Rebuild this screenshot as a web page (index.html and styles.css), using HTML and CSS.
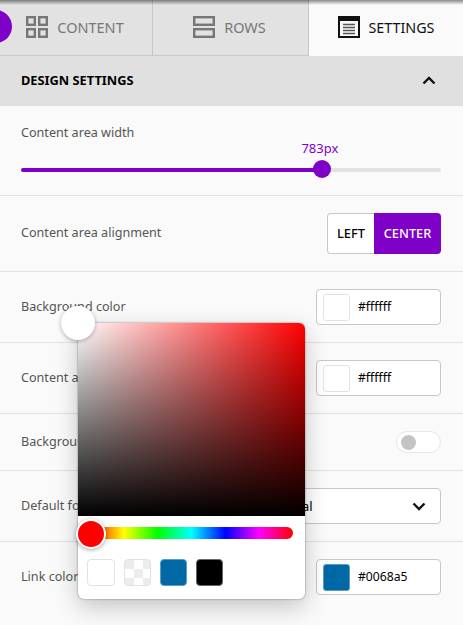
FILE: index.html
```html
<!DOCTYPE html>
<html lang="en">
<head>
    <meta charset="UTF-8">
    <meta name="viewport" content="width=device-width, initial-scale=1.0">
    <title>Design settings</title>
    <link rel="stylesheet" href="styles.css">
</head>
<body>
    <div class="top-shadow"></div>
    <div class="fab"></div>

    <nav class="tabs">
        <div class="tab">
            <svg class="tab-icon" viewBox="0 0 22 22" fill="none" stroke="currentColor" stroke-width="2.4">
                <rect x="1.2" y="1.2" width="7.6" height="7.6"/>
                <rect x="13.2" y="1.2" width="7.6" height="7.6"/>
                <rect x="1.2" y="13.2" width="7.6" height="7.6"/>
                <rect x="13.2" y="13.2" width="7.6" height="7.6"/>
            </svg>
            <span>CONTENT</span>
        </div>
        <div class="tab">
            <svg class="tab-icon" viewBox="0 0 22 22" fill="none" stroke="currentColor" stroke-width="2.4">
                <rect x="1.2" y="1.2" width="19.6" height="7.6"/>
                <rect x="1.2" y="13.2" width="19.6" height="7.6"/>
            </svg>
            <span>ROWS</span>
        </div>
        <div class="tab active">
            <svg class="tab-icon" viewBox="0 0 22 22" fill="none" stroke="currentColor">
                <rect x="1" y="1" width="20" height="20" stroke-width="2"/>
                <path d="M1 3.5h20" stroke-width="3"/>
                <path d="M5 8.5h12M5 11.5h12M5 14.5h12M5 17.5h12" stroke-width="1.3" stroke="#555"/>
            </svg>
            <span>SETTINGS</span>
        </div>
    </nav>

    <div class="section-head">
        <h2>DESIGN SETTINGS</h2>
        <svg class="chevron" viewBox="0 0 14 9" fill="none" stroke="#111" stroke-width="2.4">
            <path d="M1.5 7.5 7 2l5.5 5.5"/>
        </svg>
    </div>

    <div class="row row-slider">
        <label>Content area width</label>
        <div class="slider">
            <span class="slider-value">783px</span>
            <div class="slider-track">
                <div class="slider-fill" style="width: 71.6%"></div>
                <div class="slider-thumb" style="left: 71.6%"></div>
            </div>
        </div>
    </div>

    <div class="row">
        <label>Content area alignment</label>
        <div class="btn-group">
            <button class="btn">LEFT</button>
            <button class="btn on">CENTER</button>
        </div>
    </div>

    <div class="row">
        <label>Background color</label>
        <div class="color-input">
            <span class="swatch"></span>
            <span>#ffffff</span>
        </div>
    </div>

    <div class="row">
        <label>Content area background</label>
        <div class="color-input">
            <span class="swatch"></span>
            <span>#ffffff</span>
        </div>
    </div>

    <div class="row">
        <label>Background image</label>
        <div class="toggle"><span class="knob"></span></div>
    </div>

    <div class="row">
        <label>Default font</label>
        <div class="select">
            <span>Arial</span>
            <svg class="chevron" viewBox="0 0 14 9" fill="none" stroke="#111" stroke-width="2.4">
                <path d="M1.5 1.5 7 7l5.5-5.5"/>
            </svg>
        </div>
    </div>

    <div class="row last">
        <label>Link color</label>
        <div class="color-input">
            <span class="swatch blue"></span>
            <span>#0068a5</span>
        </div>
    </div>

    <div class="picker">
        <div class="sat-thumb"></div>
        <div class="sat-area"></div>
        <div class="hue-bar">
            <div class="hue-thumb"></div>
        </div>
        <div class="presets">
            <span class="preset white"></span>
            <span class="preset checker"></span>
            <span class="preset blue"></span>
            <span class="preset black"></span>
        </div>
    </div>
</body>
</html>
```

FILE: styles.css
```css
* {
    box-sizing: border-box;
}
html, body {
    height: 100%;
}
body {
    font-family: "Noto Sans", Arial, sans-serif;
    font-size: 12.6px;
    margin: 0;
    background-color: #fafafa;
    color: #555;
    overflow: hidden;
    position: relative;
}
.top-shadow {
    position: absolute;
    top: 0;
    left: 0;
    right: 0;
    height: 5px;
    background: linear-gradient(to bottom, rgba(0, 0, 0, 0.45), rgba(0, 0, 0, 0));
}
.fab {
    position: absolute;
    top: 10px;
    left: -21px;
    width: 33px;
    height: 33px;
    border-radius: 50%;
    background: #7f00c7;
}
.tabs {
    display: grid;
    grid-template-columns: 153px 156px 1fr;
    height: 56px;
}
.tab {
    display: flex;
    align-items: center;
    justify-content: center;
    gap: 9px;
    background: #e2e2e2;
    color: #777;
    font-size: 14.5px;
    border-right: 1px solid #c8c8c8;
    border-bottom: 1px solid #c8c8c8;
    padding: 0 2px 2px 0;
}
.tab.active {
    background: #fafafa;
    color: #111;
    border: none;
    padding: 0 0 2px;
    font-size: 14.3px;
}
.tab-icon {
    width: 22px;
    height: 22px;
}
.section-head {
    height: 50px;
    background: #e0e0e0;
    display: flex;
    align-items: center;
    justify-content: space-between;
    padding: 0 27px 2px 21px;
}
.section-head h2 {
    margin: 0;
    font-size: 12.8px;
    font-weight: 700;
    color: #000;
}
.chevron {
    width: 14px;
    height: 9px;
}
.row {
    display: flex;
    align-items: center;
    justify-content: space-between;
    padding: 17px 22px 17px 21px;
    border-bottom: 1px solid #e2e2e2;
}
.row label {
    padding-bottom: 2px;
}
.row.last {
    border-bottom: none;
}
.row-slider {
    display: block;
    height: 90px;
    padding-top: 18px;
}
.row-slider label {
    display: block;
    padding-bottom: 0;
}
.slider {
    position: relative;
    margin-top: -2px;
    padding-top: 29px;
}
.slider-value {
    position: absolute;
    top: 0;
    left: 71.4%;
    margin-left: -1px;
    transform: translateX(-50%);
    color: #7f00c7;
    font-size: 13px;
    line-height: 18px;
}
.slider-track {
    position: relative;
    height: 4px;
    border-radius: 2px;
    background: #e2e2e2;
}
.slider-fill {
    height: 100%;
    border-radius: 2px;
    background: #7f00c7;
}
.slider-thumb {
    position: absolute;
    top: -8px;
    width: 18px;
    height: 18px;
    margin-left: -9px;
    border-radius: 50%;
    background: #7f00c7;
}
.btn-group {
    display: flex;
    height: 41px;
}
.btn {
    font-family: inherit;
    font-size: 12.8px;
    font-weight: 500;
    padding: 0 0 2px;
    border: 1px solid #c8c8c8;
    border-right: none;
    border-radius: 4px 0 0 4px;
    background: #fff;
    color: #000;
    width: 47px;
}
.btn.on {
    width: 67px;
    border: none;
    border-radius: 0 4px 4px 0;
    background: #7f00c7;
    color: #fff;
}
.color-input {
    width: 125px;
    height: 36px;
    display: flex;
    align-items: center;
    gap: 8px;
    padding: 0 6px;
    background: #fff;
    border: 1px solid #c8c8c8;
    border-radius: 4px;
    color: #000;
    font-size: 12.2px;
}
.color-input span:last-child {
    padding-bottom: 2px;
}
.swatch {
    width: 27px;
    height: 27px;
    border: 1px solid #e2e2e2;
    border-radius: 3px;
    background: #fff;
}
.swatch.blue {
    background: #0068a5;
    border-color: #5a9cc4;
}
.toggle {
    width: 45px;
    height: 22px;
    display: flex;
    align-items: center;
    padding: 0 4px;
    background: #fff;
    border: 1px solid #e6e6e6;
    border-radius: 11px;
}
.knob {
    width: 15px;
    height: 15px;
    border-radius: 50%;
    background: #c4c4c4;
}
.select {
    width: 180px;
    height: 36px;
    display: flex;
    align-items: center;
    justify-content: space-between;
    padding: 0 14px 0 23px;
    background: #fff;
    border: 1px solid #c8c8c8;
    border-radius: 4px;
    color: #000;
    font-size: 13px;
}
.picker {
    position: absolute;
    top: 323px;
    left: 78px;
    width: 227px;
    height: 276px;
    background: #fff;
    border-radius: 6px;
    box-shadow: 0 0 2px rgba(0, 0, 0, 0.5), 0 8px 24px rgba(0, 0, 0, 0.22);
}
.sat-area {
    height: 193px;
    border-radius: 6px 6px 0 0;
    background: linear-gradient(to top, #000, rgba(0, 0, 0, 0)), linear-gradient(to right, #fff, #f00);
}
.sat-thumb {
    position: absolute;
    top: -17px;
    left: -17px;
    width: 34px;
    height: 34px;
    border-radius: 50%;
    background: #fff;
    box-shadow: 0 1px 4px rgba(0, 0, 0, 0.3);
}
.hue-bar {
    position: relative;
    height: 12px;
    margin: 11px 12px 0 12px;
    border-radius: 6px;
    background: linear-gradient(to right, #f00, #ff0, #0f0, #0ff, #00f, #f0f, #f00);
}
.hue-thumb {
    position: absolute;
    top: -8px;
    left: -14px;
    width: 30px;
    height: 30px;
    border: 2px solid #fff;
    border-radius: 50%;
    background: #f00;
    box-shadow: 0 1px 4px rgba(0, 0, 0, 0.35);
}
.presets {
    display: flex;
    gap: 9px;
    margin: 20px 0 0 9px;
}
.preset {
    width: 27px;
    height: 27px;
    border: 1px solid #e2e2e2;
    border-radius: 4px;
}
.preset.white {
    width: 28px;
    background: #fff;
}
.preset.checker {
    background: conic-gradient(#ececec 25%, #fff 0 50%, #ececec 0 75%, #fff 0) -9px 0 / 18px 18px;
}
.preset.blue {
    background: #0068a5;
    border-color: #5a9cc4;
}
.preset.black {
    background: #000;
    border-color: #666;
}
```
